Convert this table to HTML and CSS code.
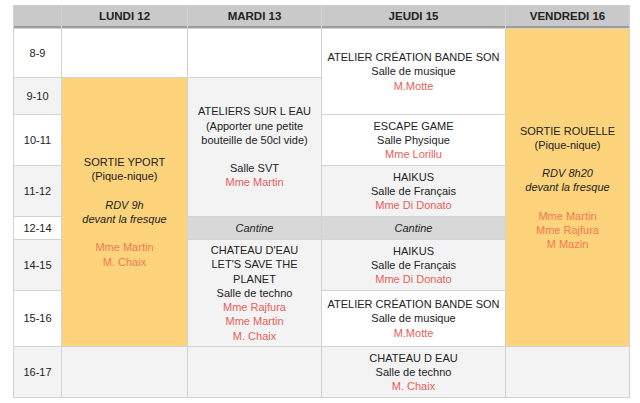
FILE: index.html
```html
<!DOCTYPE html>
<html lang="fr">
<head>
<meta charset="utf-8">
<title>Planning</title>
<link rel="stylesheet" href="styles.css">
</head>
<body>
<div class="grid">
  <div class="head c1 r1"></div>
  <div class="head c2 r1">LUNDI 12</div>
  <div class="head c3 r1">MARDI 13</div>
  <div class="head c4 r1">JEUDI 15</div>
  <div class="head c5 r1">VENDREDI 16</div>

  <div class="cell c1 r2">8-9</div>
  <div class="cell c1 r3 gray">9-10</div>
  <div class="cell c1 r4">10-11</div>
  <div class="cell c1 r5 gray">11-12</div>
  <div class="cell c1 r6">12-14</div>
  <div class="cell c1 r7 gray">14-15</div>
  <div class="cell c1 r8">15-16</div>
  <div class="cell c1 r9 gray">16-17</div>

  <div class="cell c2 r2"></div>
  <div class="cell c2 r3 s6 orange">
    <div>SORTIE YPORT<br>(Pique-nique)<br><br><i>RDV 9h<br>devant la fresque</i><br><br><span class="who">Mme Martin<br>M. Chaix</span></div>
  </div>
  <div class="cell c2 r9 gray"></div>

  <div class="cell c3 r2"></div>
  <div class="cell c3 r3 s3 gray">
    <div>ATELIERS SUR L EAU<br>(Apporter une petite<br>bouteille de 50cl vide)<br><br>Salle SVT<br><span class="who">Mme Martin</span></div>
  </div>
  <div class="cell c3 r6 cantine"><i>Cantine</i></div>
  <div class="cell c3 r7 s2 gray">
    <div>CHATEAU D'EAU<br>LET'S SAVE THE<br>PLANET<br>Salle de techno<br><span class="who">Mme Rajfura<br>Mme Martin<br>M. Chaix</span></div>
  </div>
  <div class="cell c3 r9 gray"></div>

  <div class="cell c4 r2 s2">
    <div>ATELIER CRÉATION BANDE SON<br>Salle de musique<br><span class="who">M.Motte</span></div>
  </div>
  <div class="cell c4 r4">
    <div>ESCAPE GAME<br>Salle Physique<br><span class="who">Mme Lorillu</span></div>
  </div>
  <div class="cell c4 r5 gray">
    <div>HAIKUS<br>Salle de Français<br><span class="who">Mme Di Donato</span></div>
  </div>
  <div class="cell c4 r6 cantine"><i>Cantine</i></div>
  <div class="cell c4 r7 gray">
    <div>HAIKUS<br>Salle de Français<br><span class="who">Mme Di Donato</span></div>
  </div>
  <div class="cell c4 r8">
    <div>ATELIER CRÉATION BANDE SON<br>Salle de musique<br><span class="who">M.Motte</span></div>
  </div>
  <div class="cell c4 r9 gray">
    <div>CHATEAU D EAU<br>Salle de techno<br><span class="who">M. Chaix</span></div>
  </div>

  <div class="cell c5 r2 s7 orange">
    <div>SORTIE ROUELLE<br>(Pique-nique)<br><br><i>RDV 8h20<br>devant la fresque</i><br><br><span class="who">Mme Martin<br>Mme Rajfura<br>M Mazin</span></div>
  </div>
  <div class="cell c5 r9 gray"></div>
</div>
</body>
</html>
```

FILE: styles.css
```css
html, body {
  margin: 0;
  padding: 0;
  background: #ffffff;
}
body {
  padding: 5px 0 0 13px;
  font-family: "Liberation Sans", Arial, sans-serif;
  color: #222222;
}
.grid {
  display: grid;
  width: 615px;
  grid-template-columns: 47px 125px 133px 183px 123px;
  grid-template-rows: 23px 48px 36px 50px 50px 22px 50px 55px 50px;
  gap: 1px;
  background: #d2d2d2;
  border: 1px solid #d2d2d2;
  border-top: 0;
}
.head {
  background: #c9c9c9;
  border-bottom: 2px solid #9c9c9c;
  font-weight: bold;
  font-size: 11.5px;
  display: flex;
  align-items: center;
  justify-content: center;
  padding-top: 1px;
}
.cell {
  background: #ffffff;
  display: flex;
  align-items: center;
  justify-content: center;
  text-align: center;
  font-size: 11px;
  line-height: 14.2px;
}
.gray { background: #f3f3f3; }
.cantine { background: #d8d8d8; }
.orange { background: #fdd37c; }
.who { color: #e8605a; }
.orange .who { color: #f07b52; }

.c1 { grid-column: 1; }
.c2 { grid-column: 2; }
.c3 { grid-column: 3; }
.c4 { grid-column: 4; }
.c5 { grid-column: 5; }
.r1 { grid-row-start: 1; }
.r2 { grid-row-start: 2; }
.r3 { grid-row-start: 3; }
.r4 { grid-row-start: 4; }
.r5 { grid-row-start: 5; }
.r6 { grid-row-start: 6; }
.r7 { grid-row-start: 7; }
.r8 { grid-row-start: 8; }
.r9 { grid-row-start: 9; }
.s2 { grid-row-end: span 2; }
.s3 { grid-row-end: span 3; }
.s6 { grid-row-end: span 6; }
.s7 { grid-row-end: span 7; }
```
